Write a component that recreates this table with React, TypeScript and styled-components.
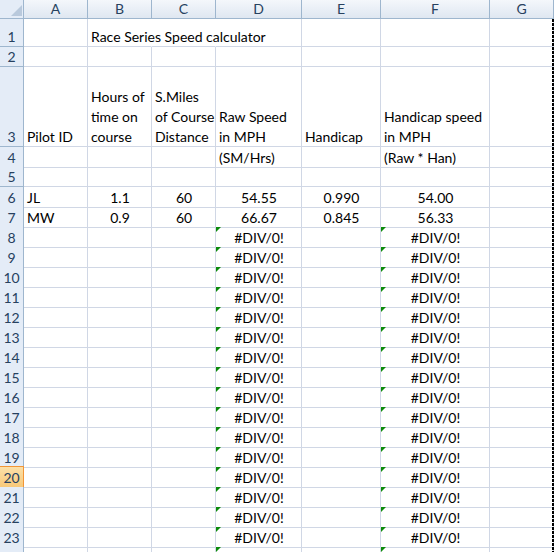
import React from 'react';
import styled, { createGlobalStyle, css } from 'styled-components';

const Global = createGlobalStyle`
  html, body { margin: 0; padding: 0; background: #fff; }
  body {
    width: 554px;
    height: 552px;
    overflow: hidden;
    font-family: Lato, "Liberation Sans", sans-serif;
    font-size: 14px;
    color: #000;
  }
`;

const COLS = '24px 64px 64px 64px 86px 79px 109px 64px';
const GRID = '#d0d7e5';
const HEAD_LINE = '#9eb6ce';

const Sheet = styled.div`
  position: relative;
  width: 554px;
  height: 552px;
  overflow: hidden;
`;

const Row = styled.div<{ $h: number }>`
  display: grid;
  grid-template-columns: ${COLS};
  height: ${(p) => p.$h}px;
`;

const Corner = styled.div`
  position: relative;
  box-sizing: border-box;
  background: #e4ecf7;
  border-right: 1px solid ${HEAD_LINE};
  border-bottom: 1px solid ${HEAD_LINE};
`;

const CornerTri = styled.div`
  position: absolute;
  right: 1px;
  bottom: 2px;
  width: 0;
  height: 0;
  border-left: 11px solid transparent;
  border-bottom: 11px solid #b9c9dc;
`;

const ColHead = styled.div`
  box-sizing: border-box;
  background: linear-gradient(#f4f7fb, #dfe7f1);
  border-right: 1px solid ${HEAD_LINE};
  border-bottom: 1px solid ${HEAD_LINE};
  color: #27415f;
  display: flex;
  align-items: center;
  justify-content: center;
  line-height: 18px;
`;

const RowHead = styled.div<{ $sel?: boolean }>`
  box-sizing: border-box;
  background: #e4ecf7;
  border-right: 1px solid ${HEAD_LINE};
  border-bottom: 1px solid ${HEAD_LINE};
  color: #27415f;
  display: flex;
  align-items: flex-end;
  justify-content: center;
  line-height: 19px;
  ${(p) =>
    p.$sel &&
    css`
      background: linear-gradient(#fbe0a8, #f8c97a);
      border-right-color: #f29536;
      border-bottom-color: #f29536;
      border-top: 1px solid #f29536;
      margin-top: -1px;
    `}
`;

const Cell = styled.div<{ $align?: 'left' | 'center' | 'right'; $open?: boolean }>`
  position: relative;
  box-sizing: border-box;
  border-right: 1px solid ${(p) => (p.$open ? 'transparent' : GRID)};
  border-bottom: 1px solid ${GRID};
  display: flex;
  align-items: flex-end;
  justify-content: ${(p) =>
    p.$align === 'center' ? 'center' : p.$align === 'right' ? 'flex-end' : 'flex-start'};
  padding: 0 2px 0 3px;
  line-height: 20px;
  white-space: nowrap;
  overflow: visible;
  min-width: 0;
`;

const Text = styled.span`
  position: relative;
  top: 1px;
`;

const Lines = styled.div`
  position: relative;
  top: 1px;
  display: flex;
  flex-direction: column;
`;

const ErrFlag = styled.div`
  position: absolute;
  left: 0;
  top: 0;
  width: 0;
  height: 0;
  border-top: 5px solid #0a8a0a;
  border-right: 5px solid transparent;
`;

const PageBreak = styled.div`
  position: absolute;
  left: 552px;
  top: 19px;
  width: 2px;
  bottom: 0;
  background: repeating-linear-gradient(#000 0 3px, transparent 3px 4px);
`;

type C = { t?: string | string[]; a?: 'left' | 'center' | 'right'; open?: boolean; err?: boolean };

const empty: C = {};

const rowsData: { n: number; h: number; cells: C[] }[] = [];

const mk = (n: number, h: number, cells: Partial<Record<number, C>>) => {
  const arr: C[] = [];
  for (let i = 0; i < 7; i++) arr.push(cells[i] || empty);
  rowsData.push({ n, h, cells: arr });
};

mk(1, 28, {
  1: { t: 'Race Series Speed calculator', open: true },
  2: { open: true },
});
mk(2, 20, {});
mk(3, 80, {
  0: { t: 'Pilot ID' },
  1: { t: ['Hours of', 'time on', 'course'] },
  2: { t: ['S.Miles', 'of Course', 'Distance'] },
  3: { t: ['Raw Speed', 'in MPH'] },
  4: { t: 'Handicap' },
  5: { t: ['Handicap speed', 'in MPH'] },
});
mk(4, 20, { 3: { t: '(SM/Hrs)' }, 5: { t: '(Raw * Han)' } });
mk(5, 20, {});
mk(6, 20, {
  0: { t: 'JL' },
  1: { t: '1.1', a: 'center' },
  2: { t: '60', a: 'center' },
  3: { t: '54.55', a: 'center' },
  4: { t: '0.990', a: 'center' },
  5: { t: '54.00', a: 'center' },
});
mk(7, 20, {
  0: { t: 'MW' },
  1: { t: '0.9', a: 'center' },
  2: { t: '60', a: 'center' },
  3: { t: '66.67', a: 'center' },
  4: { t: '0.845', a: 'center' },
  5: { t: '56.33', a: 'center' },
});
for (let n = 8; n <= 25; n++) {
  mk(n, 20, {
    3: { t: '#DIV/0!', a: 'center', err: true },
    5: { t: '#DIV/0!', a: 'center', err: true },
  });
}

const letters = ['A', 'B', 'C', 'D', 'E', 'F', 'G'];

export default function App() {
  return (
    <>
      <Global />
      <Sheet>
        <Row $h={19}>
          <Corner>
            <CornerTri />
          </Corner>
          {letters.map((l) => (
            <ColHead key={l}>{l}</ColHead>
          ))}
        </Row>
        {rowsData.map((r) => (
          <Row key={r.n} $h={r.h}>
            <RowHead $sel={r.n === 20}>{r.n}</RowHead>
            {r.cells.map((c, i) => (
              <Cell key={i} $align={c.a} $open={c.open}>
                {c.err && <ErrFlag />}
                {Array.isArray(c.t) ? (
                  <Lines>
                    {c.t.map((l) => (
                      <span key={l}>{l}</span>
                    ))}
                  </Lines>
                ) : c.t ? (
                  <Text>{c.t}</Text>
                ) : null}
              </Cell>
            ))}
          </Row>
        ))}
        <PageBreak />
      </Sheet>
    </>
  );
}
